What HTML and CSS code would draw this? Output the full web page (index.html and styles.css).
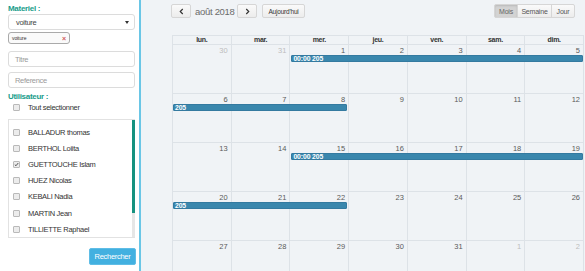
FILE: index.html
```html
<!DOCTYPE html>
<html lang="fr">
<head>
<meta charset="utf-8">
<title>Calendrier</title>
<link rel="stylesheet" href="styles.css">
</head>
<body>
<div class="app">
  <aside class="panel">
    <div class="lbl">Materiel :</div>
    <div class="select"><span>voiture</span><span class="caret"></span></div>
    <div class="tag"><span>voiture</span><span class="x">×</span></div>
    <div class="input">Titre</div>
    <div class="input second">Reference</div>
    <div class="lbl user">Utilisateur :</div>
    <div class="check all"><span class="box"></span><span>Tout selectionner</span></div>
    <div class="list">
      <div class="items">
        <div class="check"><span class="box"></span><span>BALLADUR thomas</span></div>
        <div class="check"><span class="box"></span><span>BERTHOL Loiita</span></div>
        <div class="check"><span class="box on"><svg viewBox="0 0 8 8" width="7" height="7"><path d="M1.3 4.2 L3.2 6 L6.8 1.6" fill="none" stroke="#333" stroke-width="1.3"/></svg></span><span>GUETTOUCHE Islam</span></div>
        <div class="check"><span class="box"></span><span>HUEZ Nicolas</span></div>
        <div class="check"><span class="box"></span><span>KEBALI Nadia</span></div>
        <div class="check"><span class="box"></span><span>MARTIN Jean</span></div>
        <div class="check"><span class="box"></span><span>TILLIETTE Raphael</span></div>
      </div>
      <div class="track"><div class="thumb"></div></div>
    </div>
    <div class="actions"><button class="btn-search">Rechercher</button></div>
  </aside>
  <main class="cal">
    <div class="toolbar">
      <div class="nav">
        <button class="btn icon"><svg viewBox="0 0 6 8" width="5" height="7"><path d="M4.5 1 L1.5 4 L4.5 7" fill="none" stroke="#333" stroke-width="1.4"/></svg></button>
        <span class="title">août 2018</span>
        <button class="btn icon"><svg viewBox="0 0 6 8" width="5" height="7"><path d="M1.5 1 L4.5 4 L1.5 7" fill="none" stroke="#333" stroke-width="1.4"/></svg></button>
        <button class="btn today">Aujourd'hui</button>
      </div>
      <div class="views">
        <button class="btn v active">Mois</button><button class="btn v">Semaine</button><button class="btn v">Jour</button>
      </div>
    </div>
    <div class="grid">
      <div class="head">
        <div>lun.</div><div>mar.</div><div>mer.</div><div>jeu.</div><div>ven.</div><div>sam.</div><div>dim.</div>
      </div>
      <div class="week">
        <div class="day c1 other">30</div><div class="day c2 other">31</div><div class="day c3">1</div><div class="day c4">2</div><div class="day c5">3</div><div class="day c6">4</div><div class="day c7">5</div>
        <div class="event from3"><b>00:00 205</b></div>
      </div>
      <div class="week">
        <div class="day c1">6</div><div class="day c2">7</div><div class="day c3">8</div><div class="day c4">9</div><div class="day c5">10</div><div class="day c6">11</div><div class="day c7">12</div>
        <div class="event to3"><b>205</b></div>
      </div>
      <div class="week">
        <div class="day c1">13</div><div class="day c2">14</div><div class="day c3">15</div><div class="day c4">16</div><div class="day c5">17</div><div class="day c6">18</div><div class="day c7">19</div>
        <div class="event from3"><b>00:00 205</b></div>
      </div>
      <div class="week">
        <div class="day c1">20</div><div class="day c2">21</div><div class="day c3">22</div><div class="day c4">23</div><div class="day c5">24</div><div class="day c6">25</div><div class="day c7">26</div>
        <div class="event to3"><b>205</b></div>
      </div>
      <div class="week">
        <div class="day c1">27</div><div class="day c2">28</div><div class="day c3">29</div><div class="day c4">30</div><div class="day c5">31</div><div class="day c6 other">1</div><div class="day c7 other">2</div>
      </div>
    </div>
  </main>
</div>
</body>
</html>
```

FILE: styles.css
```css
* { box-sizing: border-box; }
html, body { margin: 0; padding: 0; }
body {
  width: 585px;
  height: 271px;
  overflow: hidden;
  background: #f0f3f6;
  font-family: "Liberation Sans", Arial, sans-serif;
  font-size: 7.5px;
  letter-spacing: -0.3px;
  color: #333;
}
.app { display: flex; height: 271px; overflow: hidden; }

/* ---------- left panel ---------- */
.panel {
  width: 141px;
  flex: none;
  background: #fff;
  border-right: 2px solid #6ac6e6;
  padding: 4px 4px 0 8px;
  display: flex;
  flex-direction: column;
}
.lbl {
  color: #1a9d8b;
  font-weight: bold;
  font-size: 8px;
  line-height: 10px;
  height: 10px;
}
.lbl.user { margin-top: 4px; }
.select {
  height: 16px;
  border: 1px solid #dcdcdc;
  border-radius: 3px;
  display: flex;
  align-items: center;
  justify-content: space-between;
  padding: 0 5px 0 7px;
  color: #444;
}
.caret {
  width: 0; height: 0;
  border-left: 2px solid transparent;
  border-right: 2px solid transparent;
  border-top: 3px solid #333;
}
.tag {
  margin-top: 2px;
  width: 62px;
  height: 12px;
  border: 1px solid #aaa;
  border-radius: 3px;
  background: #fafafa;
  display: flex;
  align-items: center;
  justify-content: space-between;
  padding: 0 3px;
  font-size: 5px;
  letter-spacing: -0.1px;
  color: #333;
}
.tag .x { color: #d05a5a; font-size: 7px; font-weight: bold; }
.input {
  margin-top: 7px;
  height: 16px;
  border: 1px solid #dcdcdc;
  border-radius: 3px;
  padding: 0 6px;
  display: flex;
  align-items: center;
  color: #9a9a9a;
}
.input.second { margin-top: 5px; }

.check {
  display: flex;
  align-items: center;
  height: 16.2px;
  color: #333;
}
.check.all { height: 11px; padding-left: 5px; }
.box {
  width: 7px;
  height: 7px;
  border: 1px solid #b9b9b9;
  border-radius: 1px;
  background: #ececec;
  margin-right: 8px;
  flex: none;
  display: flex;
  align-items: center;
  justify-content: center;
}
.box svg { display: block; }
.list {
  margin-top: 6px;
  height: 119px;
  flex: none;
  border: 1px solid #e2e2e2;
  border-right: none;
  display: flex;
}
.items { flex: 1; padding: 4px 0 0 4px; }
.track {
  width: 3px;
  background: #e6e6e6;
  display: flex;
  flex-direction: column;
}
.thumb { height: 93px; background: #16927f; }
.actions { display: flex; justify-content: flex-end; margin-top: 10px; }
.btn-search {
  width: 47px;
  height: 17px;
  margin-right: -1px;
  border: 1px solid #5fbde6;
  border-radius: 2px;
  background: #42b0e0;
  color: #fff;
  font-family: inherit;
  font-size: 7.5px;
  letter-spacing: -0.3px;
  padding: 0;
}

/* ---------- calendar ---------- */
.cal {
  flex: 1;
  padding: 4px 1px 0 30px;
  display: flex;
  flex-direction: column;
  overflow: hidden;
}
.toolbar {
  display: flex;
  justify-content: space-between;
  align-items: center;
  height: 14px;
  flex: none;
  padding-right: 9px;
}
.nav { display: flex; align-items: center; }
.btn {
  height: 14px;
  border: 1px solid #d6d6d6;
  border-radius: 2px;
  background: linear-gradient(#fafafa, #ececec);
  color: #333;
  font-family: inherit;
  font-size: 6.5px;
  letter-spacing: -0.2px;
  padding: 0;
  display: flex;
  align-items: center;
  justify-content: center;
}
.btn.icon { width: 20px; }
.title {
  font-size: 9.5px;
  letter-spacing: -0.3px;
  color: #6b6b6b;
  margin: 0 4px;
  width: 38px;
  white-space: nowrap;
}
.btn.today { width: 43px; margin-left: 5px; }
.views { display: flex; }
.btn.v { border-radius: 0; margin-left: -1px; font-size: 7px; color: #555; }
.btn.v:first-child { border-radius: 2px 0 0 2px; margin-left: 0; width: 24px; }
.btn.v:nth-child(2) { width: 35px; }
.btn.v:last-child { border-radius: 0 2px 2px 0; width: 24px; }
.btn.v.active {
  background: #d3d3d3;
  box-shadow: inset 0 1px 2px rgba(0,0,0,0.12);
  color: #666;
}

.grid {
  margin-top: 17px;
  margin-left: 1px;
  flex: none;
  border-top: 1px solid #dde2e7;
  border-left: 1px solid #dde2e7;
}
.head {
  display: grid;
  grid-template-columns: repeat(7, 1fr);
}
.head div {
  height: 8px;
  line-height: 8px;
  text-align: center;
  font-weight: bold;
  font-size: 7px;
  color: #333;
  border-right: 1px solid #dde2e7;
  border-bottom: 1px solid #dde2e7;
  box-sizing: content-box;
}
.week {
  display: grid;
  grid-template-columns: repeat(7, 1fr);
  grid-template-rows: 10px 7px 1fr;
  height: 49px;
}
.day {
  grid-row: 1 / -1;
  border-right: 1px solid #dde2e7;
  border-bottom: 1px solid #dde2e7;
  text-align: right;
  padding: 1px 3px 0 0;
  font-size: 7.5px;
  letter-spacing: 0;
  line-height: 9px;
  color: #5a5a5a;
}
.day.other { color: #bdbdbd; }
.c1 { grid-column: 1; } .c2 { grid-column: 2; } .c3 { grid-column: 3; } .c4 { grid-column: 4; }
.c5 { grid-column: 5; } .c6 { grid-column: 6; } .c7 { grid-column: 7; }
.event {
  grid-row: 2;
  background: #3a87ad;
  border: 1px solid #347aa0;
  border-radius: 1px;
  color: #fff;
  font-size: 6.8px;
  letter-spacing: -0.1px;
  line-height: 5px;
  padding-left: 1px;
  z-index: 1;
  overflow: hidden;
  white-space: nowrap;
}
.event.from3 { grid-column: 3 / 8; margin: 0 1px; }
.event.to3 { grid-column: 1 / 4; margin: 0 2px 0 0; }
```
